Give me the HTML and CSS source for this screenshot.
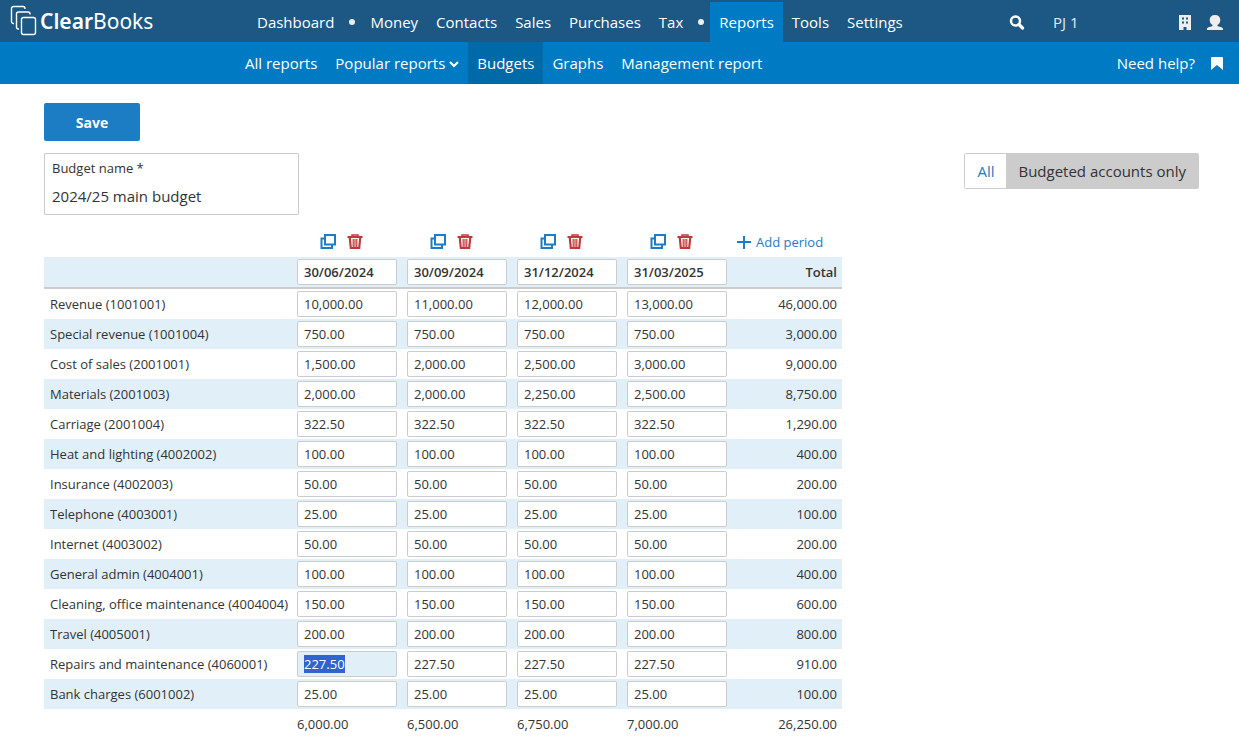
FILE: index.html
```
<!DOCTYPE html>
<html lang="en">
<head>
    <meta charset="UTF-8">
    <meta name="viewport" content="width=device-width, initial-scale=1.0">
    <title>Budgets - ClearBooks</title>
    <link rel="stylesheet" href="styles.css">
</head>
<body>
    <header>
        <div class="topbar">
            <a href="#" class="logo">
                <svg width="28" height="32" viewBox="0 0 28 32" fill="none" stroke="#fff" stroke-width="1.4">
                    <path d="M4 18.500H3.500a2 2 0 0 1-2-2V3.500a2 2 0 0 1 2-2h9.500a2 2 0 0 1 2 2V4"/>
                    <path d="M9 24H8.500a2 2 0 0 1-2-2V9a2 2 0 0 1 2-2H18a2 2 0 0 1 2 2v.5"/>
                    <rect x="11.500" y="12.500" width="14" height="17" rx="2"/>
                </svg>
                <span><b>Clear</b>Books</span>
            </a>
            <nav class="main-nav">
                <a href="#">Dashboard</a>
                <span class="dot"></span>
                <a href="#">Money</a>
                <a href="#">Contacts</a>
                <a href="#">Sales</a>
                <a href="#">Purchases</a>
                <a href="#">Tax</a>
                <span class="dot"></span>
                <a href="#" class="active">Reports</a>
                <a href="#">Tools</a>
                <a href="#">Settings</a>
            </nav>
            <div class="account">
                <button class="icon-button" aria-label="Search">
                    <svg width="16" height="16" viewBox="0 0 16 16" fill="none" stroke="#fff">
                        <circle cx="6.500" cy="7" r="4.500" stroke-width="2.500"/>
                        <path d="M10 10.500l3.500 3.500" stroke-width="3.200" stroke-linecap="round"/>
                    </svg>
                </button>
                <a href="#" class="user">PJ 1</a>
                <button class="icon-button" aria-label="Organisation">
                    <svg width="12" height="16" viewBox="0 0 12 16" fill="#eee">
                        <path fill-rule="evenodd" d="M0 1h12v15H7.500v-3h-3v3H0zM3 3.500v2h2v-2zM7 3.500v2h2v-2zM3 7.500v2h2v-2zM7 7.500v2h2v-2z"/>
                    </svg>
                </button>
                <button class="icon-button" aria-label="Profile">
                    <svg width="16" height="16" viewBox="0 0 16 16" fill="#eee">
                        <path d="M8 1c3.500 0 5.300 2 5.300 5 0 2-1 4-2.800 5v1c1 .7 5.500.8 5.500 3v1H0v-1c0-2.200 4.500-2.300 5.500-3v-1C3.700 10 2.700 8 2.700 6c0-3 1.800-5 5.300-5z"/>
                    </svg>
                </button>
            </div>
        </div>
        <div class="subbar">
            <nav class="sub-nav">
                <a href="#">All reports</a>
                <a href="#">Popular reports
                    <svg width="10" height="10" viewBox="0 0 10 10" fill="none" stroke="#fff" stroke-width="2.200">
                        <path d="M1 4l4 4 4-4"/>
                    </svg>
                </a>
                <a href="#" class="active">Budgets</a>
                <a href="#">Graphs</a>
                <a href="#">Management report</a>
            </nav>
            <div class="help">
                <a href="#">Need help?</a>
                <button class="icon-button" aria-label="Bookmark">
                    <svg width="12" height="14" viewBox="0 0 12 14" fill="#fff">
                        <path d="M1 1h10a1 1 0 0 1 1 1v12L6 9l-6 5V2a1 1 0 0 1 1-1z"/>
                    </svg>
                </button>
            </div>
        </div>
    </header>

    <main>
        <button class="save">Save</button>

        <div class="options">
            <div class="field">
                <label for="budgetName">Budget name *</label>
                <input type="text" id="budgetName" value="2024/25 main budget">
            </div>
            <div class="toggle">
                <button>All</button>
                <button class="selected">Budgeted accounts only</button>
            </div>
        </div>

        <table class="budget">
            <colgroup>
                <col class="account-col">
                <col span="5" class="period-col">
            </colgroup>
            <thead>
                <tr class="actions" id="actionRow"></tr>
                <tr class="periods" id="periodRow"></tr>
            </thead>
            <tbody id="budgetRows"></tbody>
            <tfoot>
                <tr id="totalRow"></tr>
            </tfoot>
        </table>
    </main>

    <script>
        const periods = ['30/06/2024', '30/09/2024', '31/12/2024', '31/03/2025'];

        const accounts = [
            { name: 'Revenue', code: '1001001', values: [10000, 11000, 12000, 13000] },
            { name: 'Special revenue', code: '1001004', values: [750, 750, 750, 750] },
            { name: 'Cost of sales', code: '2001001', values: [1500, 2000, 2500, 3000] },
            { name: 'Materials', code: '2001003', values: [2000, 2000, 2250, 2500] },
            { name: 'Carriage', code: '2001004', values: [322.5, 322.5, 322.5, 322.5] },
            { name: 'Heat and lighting', code: '4002002', values: [100, 100, 100, 100] },
            { name: 'Insurance', code: '4002003', values: [50, 50, 50, 50] },
            { name: 'Telephone', code: '4003001', values: [25, 25, 25, 25] },
            { name: 'Internet', code: '4003002', values: [50, 50, 50, 50] },
            { name: 'General admin', code: '4004001', values: [100, 100, 100, 100] },
            { name: 'Cleaning, office maintenance', code: '4004004', values: [150, 150, 150, 150] },
            { name: 'Travel', code: '4005001', values: [200, 200, 200, 200] },
            { name: 'Repairs and maintenance', code: '4060001', values: [227.5, 227.5, 227.5, 227.5] },
            { name: 'Bank charges', code: '6001002', values: [25, 25, 25, 25] }
        ];

        const copyIcon = `<svg width="16" height="16" viewBox="0 0 16 16" fill="none" stroke="#1c7cc4" stroke-width="2">
            <rect x="5" y="1" width="10" height="9.500"/><path d="M4 4.500H1.500V14H12v-3"/></svg>`;
        const binIcon = `<svg width="16" height="16" viewBox="0 0 16 16" fill="none" stroke="#c0393b">
            <path d="M.5 3h15" stroke-width="2"/><path d="M5 2V1h6v1" stroke-width="1.500"/>
            <path d="M2.800 4l1 10h8.400l1-10" stroke-width="2.200"/>
            <path d="M6.200 5v8M8 5v8M9.800 5v8" stroke-width="1.200"/></svg>`;
        const plusIcon = `<svg width="14" height="14" viewBox="0 0 14 14" stroke="#1c7cc4" stroke-width="2">
            <path d="M7 1v13M0 7h14"/></svg>`;

        function money(n) {
            return n.toLocaleString('en-GB', { minimumFractionDigits: 2, maximumFractionDigits: 2 });
        }

        function sum(list) {
            return list.reduce((a, b) => a + b, 0);
        }

        // Header rows
        document.getElementById('actionRow').innerHTML = '<td></td>' + periods.map(p =>
            `<td><div class="period-actions">
                <button class="icon-button" aria-label="Copy ${p}">${copyIcon}</button>
                <button class="icon-button" aria-label="Delete ${p}">${binIcon}</button>
            </div></td>`
        ).join('') + `<td><button class="add-period">${plusIcon}Add period</button></td>`;

        document.getElementById('periodRow').innerHTML = '<th></th>' + periods.map((p, i) =>
            `<th><input type="text" value="${p}" aria-label="Period ${i + 1} end date"></th>`
        ).join('') + '<th class="total">Total</th>';

        // Account rows
        document.getElementById('budgetRows').innerHTML = accounts.map(a =>
            `<tr><td class="account-name">${a.name} (${a.code})</td>` + a.values.map((v, i) =>
                `<td><input type="text" id="a${a.code}-${i}" value="${money(v)}" aria-label="${a.name} ${periods[i]}"></td>`
            ).join('') + `<td class="total">${money(sum(a.values))}</td></tr>`
        ).join('');

        // Income accounts start with 1, everything else is a cost
        const net = periods.map((p, i) =>
            sum(accounts.map(a => a.code[0] === '1' ? a.values[i] : -a.values[i]))
        );
        document.getElementById('totalRow').innerHTML = '<td></td>' +
            net.map(n => `<td>${money(n)}</td>`).join('') +
            `<td class="total">${money(sum(net))}</td>`;

        document.getElementById('a4060001-0').select();
    </script>
</body>
</html>
```
FILE: styles.css
```
* {
    box-sizing: border-box;
}

body {
    margin: 0;
    font-family: "Open Sans", "Noto Sans", sans-serif;
    font-size: 13px;
    color: #333;
    background: #fff;
}

a {
    color: inherit;
    text-decoration: none;
}

button,
input {
    font: inherit;
    color: inherit;
}

button {
    cursor: pointer;
}

svg {
    display: block;
    flex: none;
}

.icon-button {
    padding: 0;
    border: none;
    background: none;
}

/* Header */
.topbar,
.subbar {
    display: flex;
    height: 42px;
    font-size: 15px;
    color: #fff;
}

.topbar {
    background: #1c5883;
    padding-top: 2px;
}

.subbar {
    background: #007bc3;
    padding-left: 236px;
}

.logo {
    display: flex;
    align-items: center;
    gap: 2px;
    width: 248px;
    padding: 0 0 2px 10px;
    font-family: "Noto Sans", sans-serif;
    font-size: 21px;
}

.logo b {
    font-weight: 600;
}

.main-nav,
.sub-nav {
    display: flex;
    flex: 1;
}

.main-nav a,
.sub-nav a {
    display: flex;
    align-items: center;
    gap: 4px;
    padding: 0 9px;
    white-space: nowrap;
}

.main-nav .active {
    background: #007bc3;
}

.sub-nav .active {
    background: #006aa9;
}

.dot {
    align-self: center;
    width: 6px;
    height: 6px;
    margin: 0 6px;
    border-radius: 50%;
    background: #eee;
}

.account,
.help {
    display: flex;
    align-items: center;
    gap: 16px;
    padding-right: 16px;
}

.user {
    width: 110px;
    margin-left: 12px;
    color: #e4ebf0;
}

/* Content */
main {
    padding: 19px 40px 0 44px;
}

.save {
    display: block;
    width: 96px;
    height: 38px;
    border: none;
    border-radius: 2px;
    background: #1c7cc4;
    color: #fff;
    font-size: 14px;
    font-weight: 700;
}

.options {
    display: flex;
    justify-content: space-between;
    align-items: flex-start;
    margin: 12px 0;
}

.field {
    width: 255px;
    height: 62px;
    padding: 4px 7px;
    border: 1px solid #ccc;
    border-radius: 1px;
}

.field label {
    display: block;
    line-height: 20px;
}

.field input {
    width: 100%;
    height: 26px;
    margin-top: 5px;
    padding: 0;
    border: none;
    font-size: 15px;
}

.toggle {
    display: flex;
    height: 36px;
    border: 1px solid #ccc;
    border-radius: 2px;
}

.toggle button {
    padding: 0 12px;
    border: none;
    background: #fff;
    color: #1c7cc4;
    font-size: 15px;
}

.toggle .selected {
    background: #ccc;
    color: #333;
}

/* Budget table */
.budget {
    width: 798px;
    table-layout: fixed;
    border-collapse: separate;
    border-spacing: 0;
}

.period-col {
    width: 110px;
}

.budget td,
.budget th {
    height: 30px;
    padding: 0 5px;
    text-align: left;
    white-space: nowrap;
}

.budget .total {
    text-align: right;
}

.budget .account-name {
    padding-left: 6px;
}

.periods {
    background: #e1eff8;
}

.budget .periods th {
    height: 32px;
    border-bottom: 2px solid #ccc;
    font-weight: 600;
}

.budget tbody tr:nth-child(even) {
    background: #e1eff8;
}

.budget input {
    display: block;
    width: 100px;
    height: 26px;
    padding: 0 6px;
    border: 1px solid #ccc;
    border-radius: 2px;
    background: #fff;
    line-height: 24px;
}

.budget input:focus {
    outline: none;
    background: #e1eff8;
}

.budget input::selection {
    background: #2f63d0;
    color: #fff;
}

.period-actions {
    display: flex;
    gap: 11px;
    padding-left: 23px;
}

.add-period {
    display: flex;
    align-items: center;
    gap: 5px;
    padding: 0;
    border: none;
    background: none;
    color: #1c7cc4;
}
```
